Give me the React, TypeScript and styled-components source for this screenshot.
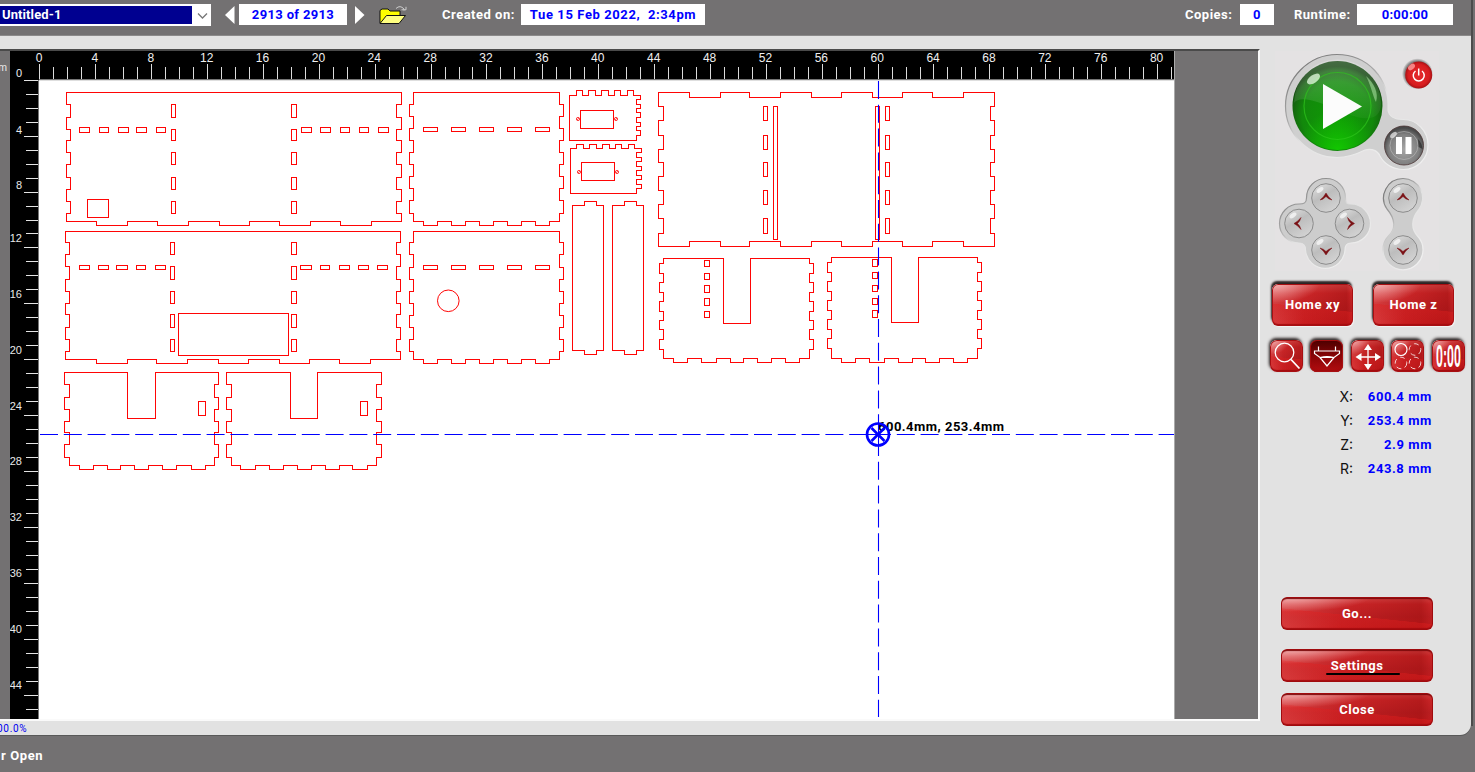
import React from "react";
import styled, { createGlobalStyle } from "styled-components";

const GlobalStyle = createGlobalStyle`
  * { box-sizing: border-box; }
  html, body { margin: 0; padding: 0; }
  body {
    width: 1475px;
    height: 772px;
    overflow: hidden;
    background: #737172;
    font-family: Roboto, "Liberation Sans", sans-serif;
  }
  button { font-family: inherit; border: 0; padding: 0; }
`;

/* ---------- shell ---------- */

const Screen = styled.div`
  display: flex;
  width: 1475px;
  height: 772px;
  overflow: hidden;
  background: #737172;
`;

const Window = styled.div`
  display: flex;
  flex-direction: column;
  width: 1471px;
`;

const EdgeStrip = styled.div`
  width: 4px;
  height: 726px;
  background: linear-gradient(90deg, #4c4c4c 0 2px, #737172 2px);
`;

const TopBar = styled.header`
  display: flex;
  align-items: flex-start;
  height: 36px;
  padding-top: 4px;
  border-bottom: 1px solid #8b8a8a;
`;

const Body = styled.main`
  display: flex;
  align-items: flex-start;
  height: 699px;
  background: #e2e2e2;
  border-bottom-right-radius: 11px;
  box-shadow: 0 1px 0 #595959;
`;

const StatusBar = styled.footer`
  padding: 13px 0 0 1px;
  color: #fff;
  font-size: 13px;
  font-weight: 700;
  line-height: 16px;
  letter-spacing: 0.6px;
`;

/* ---------- top bar parts ---------- */

const FileSelect = styled.div`
  display: flex;
  width: 211px;
  height: 22px;
  padding: 2px 0;
  background: #fff;
`;

const Selected = styled.div`
  width: 192px;
  padding-left: 2px;
  background: #000090;
  color: #fff;
  font-size: 13px;
  font-weight: 700;
  line-height: 17px;
  letter-spacing: 0.1px;
`;

const Arrow = styled.svg<{ $left: number }>`
  display: block;
  width: 10px;
  height: 18px;
  margin: 2px 0 0 ${(p) => p.$left}px;
`;

const Field = styled.div<{ $width: number; $left: number; $spacing?: number }>`
  width: ${(p) => p.$width}px;
  height: 21px;
  margin-left: ${(p) => p.$left}px;
  background: #fff;
  color: #0000ff;
  font-size: 13px;
  font-weight: 700;
  line-height: 21px;
  letter-spacing: ${(p) => p.$spacing ?? 0.3}px;
  text-align: center;
  white-space: pre;
`;

const Caption = styled.div<{ $left: number; $width: number }>`
  width: ${(p) => p.$width}px;
  margin-left: ${(p) => p.$left}px;
  color: #fff;
  font-size: 13px;
  font-weight: 700;
  line-height: 21px;
  letter-spacing: 0.5px;
  white-space: nowrap;
`;

const FolderIcon = styled.svg`
  display: block;
  width: 30px;
  height: 22px;
  margin-left: 13px;
`;

/* ---------- work area ---------- */

const WorkColumn = styled.section`
  display: flex;
  flex-direction: column;
  width: 1260px;
  padding-top: 13px;
`;

const Frame = styled.div`
  display: flex;
  width: 1260px;
  height: 672px;
  background: #737172;
  border-top: 2px solid #4a4a4a;
  border-right: 2px solid #fafafa;
  border-bottom: 2px solid #fafafa;
`;

const Gutter = styled.div`
  display: flex;
  justify-content: flex-end;
  width: 10px;
  padding: 10px 3px 0 0;
  color: #eee;
  font-size: 10px;
  line-height: 14px;
`;

const Bed = styled.div`
  display: flex;
  flex-direction: column;
  width: 1165px;
  border-right: 1px solid #aaa;
`;

const BedRow = styled.div`
  display: flex;
`;

const TopRuler = styled.svg`
  display: block;
  width: 1164px;
  height: 29px;
  background: #000;
`;

const SideRuler = styled.svg`
  display: block;
  width: 29px;
  height: 639px;
  background: #000;
`;

const Sheet = styled.svg`
  display: block;
  width: 1135px;
  height: 639px;
  background: #fff;
`;

const Zoom = styled.div`
  margin-left: -3px;
  color: #0000f0;
  font-size: 10px;
  line-height: 15px;
  letter-spacing: 0.7px;
`;

/* ---------- control panel ---------- */

const Panel = styled.aside`
  display: flex;
  flex-direction: column;
  width: 211px;
  padding-top: 14px;
`;

const Pad = styled.svg`
  display: block;
  width: 164px;
  height: 222px;
  margin-left: 15px;
`;

const HomeRow = styled.div`
  display: flex;
  gap: 20px;
  padding: 12px 0 0 12px;
`;

const redGloss = `
  background:
    radial-gradient(ellipse 55% 45% at 4% 0%, rgba(255,255,255,.55), rgba(255,255,255,0) 100%),
    linear-gradient(186deg, rgba(0,0,0,0) 55%, rgba(225,30,30,.4) 56%, rgba(225,30,30,0) 95%),
    linear-gradient(90deg, rgba(255,130,130,.3), rgba(150,0,0,0) 40%, rgba(130,0,0,.3) 92%, rgba(200,0,0,0)),
    linear-gradient(180deg, #d94848 0, #cb2628 22%, #bd2023 60%, #c91c1e 100%);
`;

const HomeButton = styled.button`
  width: 81px;
  height: 42px;
  border-radius: 6px;
  ${redGloss}
  box-shadow: inset 0 0 0 1px #a80f12, inset 0 -2px 1px #a60d10, -1px -3px 2px #2c2424, 1px 1px 1px #f4f4f4;
  color: #fff;
  font-size: 13px;
  font-weight: 700;
  line-height: 40px;
  letter-spacing: 0.55px;
`;

const ToolRow = styled.div`
  display: flex;
  gap: 7.6px;
  padding: 14px 0 0 9.5px;
`;

const ToolButton = styled.button<{ $pressed?: boolean }>`
  width: 33px;
  height: 32px;
  border-radius: 7px;
  ${redGloss}
  ${(p) => p.$pressed && "background: linear-gradient(180deg, #4c0000, #8d0507 55%, #b30d10);"}
  box-shadow: inset 0 0 0 1px #a80f12, inset 0 -2px 1px #a00b0e, -1px -2px 3px #2c2424;
`;

const ToolIcon = styled.svg`
  display: block;
  width: 33px;
  height: 32px;
`;

const Readouts = styled.dl`
  display: grid;
  grid-template-columns: 93px 79px;
  grid-auto-rows: 24.1px;
  margin: 12.5px 0 0;
`;

const Axis = styled.dt`
  color: #111;
  font-family: Inter, Roboto, sans-serif;
  font-size: 14px;
  line-height: 24px;
  text-align: right;
`;

const AxisValue = styled.dd`
  margin: 0;
  color: #0000ff;
  font-size: 13px;
  font-weight: 700;
  line-height: 24px;
  letter-spacing: 0.6px;
  text-align: right;
`;

const Actions = styled.div`
  display: flex;
  flex-direction: column;
  padding: 116.5px 0 0 21px;
`;

const ActionButton = styled.button<{ $gap?: number }>`
  width: 152px;
  height: 33px;
  margin-top: ${(p) => p.$gap ?? 0}px;
  border-radius: 6px;
  ${redGloss}
  box-shadow: inset 0 0 0 1px #a00b0e, inset 0 2px 1px #7c090b, inset 0 -2px 1px #a60d10;
  color: #fff;
  font-size: 13px;
  font-weight: 700;
  line-height: 32px;
  letter-spacing: 0.5px;
`;

const Underlined = styled.span`
  position: relative;
  &::after {
    content: "";
    position: absolute;
    left: -5px;
    right: -17px;
    bottom: -2px;
    height: 2px;
    border-radius: 1px;
    background: #000;
  }
`;

/* ---------- cut drawing ---------- */

type Box = [number, number, number, number];

// Finger joints along a vertical edge, alternating between x = a and x = b.
const vz = (ys: number[], a: number, b: number) =>
  ys.map((y, i) => `V${y}H${i % 2 ? a : b}`).join("");
// Finger joints along a horizontal edge, alternating between y = a and y = b.
const hz = (xs: number[], a: number, b: number) =>
  xs.map((x, i) => `H${x}V${i % 2 ? a : b}`).join("");
const rev = (n: number[]) => [...n].reverse();
const pairs = (n: number[]): [number, number][] =>
  n.reduce<[number, number][]>((out, v, i) => (i % 2 ? out : [...out, [v, n[i + 1]]]), []);
const rowSlots = (xs: number[], y0: number, y1: number): Box[] =>
  pairs(xs).map(([a, b]) => [a, y0, b, y1]);
const colSlots = (ys: number[], x0: number, x1: number): Box[] =>
  pairs(ys).map(([a, b]) => [x0, a, x1, b]);

const aY = [104, 117, 129, 140, 152, 164, 177, 189, 201, 213];
const bY = [242, 254, 266, 279, 291, 303, 314, 327, 339, 351];
const cY = [384, 397, 409, 421, 432, 444, 457];
const dY = [104, 116, 128, 140, 152, 164, 176, 188, 200, 213];
const eY = [242, 254, 267, 279, 291, 303, 315, 327, 339, 351];
const dX = [423, 437, 451, 465, 479, 493, 507, 521, 535, 549];
const iX = [689, 720, 749, 780, 811, 841, 872, 902, 932, 963];
const iY = [106, 120, 135, 149, 162, 176, 190, 204, 218, 233];
const jY = [263, 273, 282, 292, 301, 311, 320, 329, 339, 349];
const kY = [262, 272, 281, 291, 300, 310, 319, 329, 338, 348];

const outlines = [
  `M66 92${vz(aY, 66, 70)}V221${hz([96, 127, 157, 188, 219, 249, 279, 310, 340, 371], 221, 225)}H401${vz(rev(aY), 401, 396)}V92Z`,
  `M65 231${vz(bY, 65, 69)}V359${hz([96, 127, 156, 187, 218, 248, 279, 309, 339, 370], 359, 363)}H400${vz(rev(bY), 400, 396)}V231Z`,
  `M64 372${vz(cY, 64, 69)}V465${hz([79, 93, 107, 120, 134, 148, 162, 176, 191, 205], 465, 469)}H214V457H218${vz(rev(cY).slice(1), 218, 214)}V372H155V418H127V372Z`,
  `M226 372${vz(cY, 226, 231)}V465${hz([240, 255, 269, 283, 297, 311, 325, 339, 352, 367], 465, 469)}H376V457H381${vz(rev(cY).slice(1), 381, 376)}V372H317V418H290V372Z`,
  `M413 92${vz(dY, 413, 409)}V221${hz(dX, 221, 225)}H559${vz(rev(dY), 559, 563)}V92Z`,
  `M413 231${vz(eY, 413, 409)}V359${hz(dX, 359, 363)}H559${vz(rev(eY), 559, 563)}V231Z`,
  `M569 95${hz([576, 582, 588, 595, 601, 608, 614, 620, 627, 633], 95, 90)}H640${vz([99, 104, 108, 112, 117, 122, 126, 130, 135], 640, 636)}V140H569Z`,
  `M570 148${hz([576, 583, 589, 596, 602, 609, 615, 621, 628, 634], 148, 144)}H641${vz([152, 157, 161, 166, 170, 175, 179, 184, 188], 641, 636)}V193H570Z`,
  `M572 205H584V201H596V205H603V350H596V354H584V350H572Z`,
  `M612 205H624V201H636V205H643V350H636V354H624V350H612Z`,
  `M658 92${hz(iX, 92, 97)}H994${vz(iY, 994, 990)}V246${hz(rev(iX), 246, 241)}H658${vz(rev(iY), 658, 663)}V92Z`,
  `M663 258${vz(jY, 663, 659)}V358${hz([673, 687, 701, 716, 730, 743, 757, 771, 785, 799], 358, 362)}H809${vz(rev(jY), 809, 813)}V258H750V323H723V258Z`,
  `M831 257${vz(kY, 831, 827)}V358${hz([841, 855, 869, 884, 898, 912, 925, 939, 953, 967], 358, 362)}H977${vz(rev(kY), 977, 981)}V257H918V322H891V257Z`,
];

const slots: Box[] = [
  ...rowSlots([79, 89, 99, 108, 118, 128, 136, 146, 156, 165], 127, 132),
  ...rowSlots([301, 311, 320, 330, 340, 349, 359, 368, 378, 388], 127, 132),
  ...colSlots(aY, 171, 175),
  ...colSlots(aY, 291, 296),
  [87, 199, 108, 217],
  ...rowSlots([79, 89, 98, 108, 116, 127, 136, 145, 155, 165], 265, 269),
  ...rowSlots([300, 311, 320, 329, 339, 349, 358, 368, 377, 387], 265, 269),
  ...colSlots(bY, 170, 174),
  ...colSlots(bY, 291, 296),
  [178, 313, 288, 355],
  [198, 401, 205, 415],
  [360, 401, 367, 415],
  ...rowSlots(dX, 127, 131),
  ...rowSlots(dX, 265, 269),
  [580, 110, 613, 128],
  [581, 162, 614, 180],
  ...colSlots(iY, 763, 767),
  ...colSlots(iY, 885, 889),
  [773, 106, 777, 239],
  [875, 106, 879, 239],
  ...colSlots([260, 266, 273, 279, 285, 292, 298, 305, 311, 317], 704, 709),
  ...colSlots([259, 266, 272, 278, 285, 291, 298, 304, 310, 317], 872, 877),
];

const holes = [
  [577.5, 118.5],
  [615.5, 118.5],
  [578.5, 171.5],
  [616.5, 171.5],
];

const slotPath = slots.map(([a, b, c, d]) => `M${a} ${b}H${c}V${d}H${a}Z`).join("");

function CutSheet() {
  return (
    <Sheet viewBox="39 80 1135 639">
      <path d="M39 80.5H1174" stroke="#dedede" />
      <g transform="translate(.5 .5)" fill="none" stroke="#ff0505" strokeWidth="1">
        {outlines.map((d) => (
          <path key={d} d={d} shapeRendering="crispEdges" />
        ))}
        <path d={slotPath} shapeRendering="crispEdges" />
        <circle cx="447.8" cy="300.3" r="10.8" />
        {holes.map(([x, y]) => (
          <g key={`${x}-${y}`}>
            <circle cx={x} cy={y} r="1.6" strokeWidth=".8" />
            <path d={`M${x - 1} ${y + 1}l2 -2`} strokeWidth=".6" />
          </g>
        ))}
      </g>
      <text x="878" y="431" fontFamily="Roboto, sans-serif" fontSize="13" fontWeight="700" textLength="126" fill="#000">
        600.4mm, 253.4mm
      </text>
      <g fill="none" stroke="#0000ff">
        <path d="M40 434.5H1174" strokeDasharray="18 5.8" />
        <path d="M878.5 81V717" strokeDasharray="18 5.8" strokeWidth="1.1" />
        <circle cx="878" cy="434.5" r="11" strokeWidth="2.6" />
        <path d="M878.5 423v24M867 434.5h22" strokeWidth="1" />
        <path d="M871.5 428l13 13M884.5 428l-13 13" strokeWidth="2.6" />
      </g>
    </Sheet>
  );
}

const STEP = 13.97;

function HorizontalRuler() {
  return (
    <TopRuler viewBox="10 51 1164 29">
      {Array.from({ length: 82 }, (_, i) => {
        const x = Math.floor(39.9 + i * STEP) + 0.5;
        return <path key={i} d={`M${x} ${i % 4 ? 67 : 64}V79`} stroke="#dcdcdc" />;
      })}
      <g fill="#f0f0f0" fontFamily="Liberation Sans, sans-serif" fontSize="12" textAnchor="middle">
        {Array.from({ length: 21 }, (_, i) => (
          <text key={i} x={39 + i * 4 * STEP} y="62">
            {i * 4}
          </text>
        ))}
        <text x="19" y="77" fontSize="11">
          0
        </text>
      </g>
      <path d="M39 79.5H1174" stroke="#777" />
      <path d="M24 79.5H38" stroke="#000" />
    </TopRuler>
  );
}

const sideLabels = [129.5, 184.5, 238, 293.5, 349.5, 405.5, 461, 517, 573, 628.5, 685];

function VerticalRuler() {
  return (
    <SideRuler viewBox="10 80 29 639">
      {Array.from({ length: 46 }, (_, i) => {
        const y = Math.floor(80.2 + i * 13.98) + 0.5;
        return <path key={i} d={`M${i % 4 ? 26 : 24} ${y}H38`} stroke="#e4e4e4" />;
      })}
      <g fill="#e8e8e8" fontFamily="Liberation Sans, sans-serif" fontSize="11" textAnchor="end">
        {sideLabels.map((y, i) => (
          <text key={y} x="22" y={y + 4}>
            {(i + 1) * 4}
          </text>
        ))}
      </g>
      <path d="M38.5 80V719" stroke="#777" />
    </SideRuler>
  );
}

/* ---------- jog pad ---------- */

const jogKeys = [
  { x: 1326, y: 198, turn: 0 },
  { x: 1299, y: 223.5, turn: -90 },
  { x: 1349.5, y: 223.5, turn: 90 },
  { x: 1326, y: 250, turn: 180 },
  { x: 1403, y: 198, turn: 0 },
  { x: 1403, y: 250, turn: 180 },
];

function ControlPad() {
  return (
    <Pad viewBox="1275 50 164 222">
      <defs>
        <radialGradient id="green" cx=".5" cy=".62" r=".56">
          <stop offset="0" stopColor="#0f9a05" />
          <stop offset=".7" stopColor="#12890b" />
          <stop offset=".92" stopColor="#14600f" />
          <stop offset="1" stopColor="#0b3f08" />
        </radialGradient>
        <radialGradient id="greenGlow" cx=".5" cy="1" r=".45">
          <stop offset="0" stopColor="#12c800" />
          <stop offset="1" stopColor="#12c800" stopOpacity="0" />
        </radialGradient>
        <linearGradient id="greenTop" x1="0" y1="0" x2="0" y2="1">
          <stop offset="0" stopColor="#fff" stopOpacity=".24" />
          <stop offset="1" stopColor="#fff" stopOpacity=".04" />
        </linearGradient>
        <radialGradient id="greyKey" cx=".5" cy=".6" r=".55">
          <stop offset="0" stopColor="#a5a5a5" />
          <stop offset=".7" stopColor="#808080" />
          <stop offset="1" stopColor="#484848" />
        </radialGradient>
        <radialGradient id="redKey" cx=".5" cy=".5" r=".52">
          <stop offset="0" stopColor="#e52a2d" />
          <stop offset=".75" stopColor="#d81d20" />
          <stop offset="1" stopColor="#a00f12" />
        </radialGradient>
        <linearGradient id="jog" x1="0" y1="0" x2=".6" y2="1">
          <stop offset="0" stopColor="#e4e4e4" />
          <stop offset=".5" stopColor="#bdbdbd" />
          <stop offset="1" stopColor="#d2d2d2" />
        </linearGradient>
        <linearGradient id="rim" x1="0" y1="0" x2=".7" y2="1">
          <stop offset="0" stopColor="#686868" />
          <stop offset=".4" stopColor="#aaa" />
          <stop offset=".55" stopColor="#e2e2e2" />
          <stop offset="1" stopColor="#efefef" />
        </linearGradient>
        <radialGradient id="redHalo" cx=".5" cy=".5" r=".5">
          <stop offset=".82" stopColor="#777" stopOpacity=".9" />
          <stop offset="1" stopColor="#777" stopOpacity="0" />
        </radialGradient>
      </defs>
      <rect x="1275" y="51" width="164" height="220" fill="#e4e2e3" />

      <path
        d="M1337 54.5C1309 54.5 1285.5 78 1285.5 106S1309 157.5 1337 157.5C1347 157.5 1356 154.5 1365 150C1372 148 1378 151 1380 156C1384 164 1393 169.5 1403.500 169.5C1417 169.5 1428 159 1428 145S1417 119.5 1403.500 119.5C1396 119.5 1389 117.5 1388 110C1390 78 1367 54.5 1337 54.5Z"
        fill="#cfcfcf"
        stroke="url(#rim)"
        strokeWidth="1.2"
      />
      <circle cx="1337.5" cy="106" r="45" fill="url(#green)" />
      <path d="M1294 103a43.5 43.5 0 0 1 87 0C1381 125 1358 119 1340 111S1300 94 1294 103Z" fill="url(#greenTop)" />
      <circle cx="1337.5" cy="106" r="44" fill="url(#greenGlow)" />
      <circle cx="1337.5" cy="106" r="33.5" fill="none" stroke="#2fc71d" strokeWidth="1.2" opacity=".65" />
      <ellipse cx="1313.5" cy="79" rx="7.5" ry="4" fill="#dcf2d8" opacity=".8" transform="rotate(-35 1313.5 79)" />
      <path d="M1366 76C1374 83 1379 93 1376 102C1373 97 1372 88 1366 76Z" fill="#a5e09c" opacity=".6" />
      <path d="M1323 84L1362 106.5L1323 129Z" fill="#fcfcfc" />

      <circle cx="1404" cy="145.5" r="19.5" fill="url(#greyKey)" stroke="#4a3434" strokeWidth=".8" />
      <circle cx="1404" cy="145.5" r="14" fill="none" stroke="#bdbdbd" opacity=".6" />
      <ellipse cx="1393.5" cy="135" rx="4" ry="2.2" fill="#ddd" opacity=".8" transform="rotate(-42 1393.5 135)" />
      <path d="M1418 139q4 4 4.500 10l-4 -2z" fill="#1d1d1d" opacity=".6" />
      <path d="M1396 137h6v17h-6zM1405.500 137h6v17h-6z" fill="#fff" />

      <circle cx="1417.5" cy="73.8" r="15.500" fill="url(#redHalo)" />
      <circle cx="1418.7" cy="75" r="13.500" fill="url(#redKey)" />
      <ellipse cx="1411.5" cy="67" rx="4" ry="2.5" fill="#ff9d9d" opacity=".8" transform="rotate(-40 1411.5 67)" />
      <path d="M1415.500 71a5.500 5.500 0 1 0 6.500 0M1418.700 68.500v7" fill="none" stroke="#fff" strokeWidth="1.5" />

      <path
        d="M1326 178.5C1315 178.5 1306.500 187 1306.500 198C1306.500 203 1304 204 1299 204A19.5 19.5 0 0 0 1299 243C1304 243 1305.500 245 1305.500 250A19.800 19.800 0 0 0 1345 250C1345 245 1346.500 243 1351 243A19.5 19.5 0 0 0 1351 204C1346.500 204 1345.500 203 1345.500 198C1345.500 187 1337 178.500 1326 178.500Z"
        fill="#cdcdcd"
        stroke="url(#rim)"
        strokeWidth="1.2"
      />
      <path
        d="M1403 178.5A19.5 19.5 0 0 0 1387 209C1395.500 219 1396 229 1388.500 236A20 20 0 1 0 1417.500 236C1411 229 1411 219 1418.500 210A19.5 19.5 0 0 0 1403 178.500Z"
        fill="#cdcdcd"
        stroke="url(#rim)"
        strokeWidth="1.2"
      />
      {jogKeys.map((k) => (
        <g key={`${k.x}-${k.y}`} transform={`translate(${k.x} ${k.y})`}>
          <circle r="14.3" fill="url(#jog)" stroke="#8c8c8c" strokeWidth="1" />
          <ellipse cx="-6" cy="-8" rx="4" ry="2" fill="#f6f6f6" opacity=".8" transform="rotate(-35 -6 -8)" />
          <path
            d="M0 -5Q2 -1 6 2Q2 1 0 -1.5Q-2 1 -6 2Q-2 -1 0 -5Z"
            fill="#7a1014"
            stroke="#7a1014"
            strokeWidth=".5"
            transform={`rotate(${k.turn})`}
          />
        </g>
      ))}
    </Pad>
  );
}

/* ---------- page ---------- */

const readouts = [
  ["X:", "600.4 mm"],
  ["Y:", "253.4 mm"],
  ["Z:", "2.9 mm"],
  ["R:", "243.8 mm"],
];

export default function App() {
  return (
    <>
      <GlobalStyle />
      <Screen>
        <Window>
          <TopBar>
            <FileSelect>
              <Selected>Untitled-1</Selected>
              <svg width="18" height="18">
                <path d="M6 7.5l4.500 4.500 4.500-4.500" fill="none" stroke="#777" strokeWidth="1.3" />
              </svg>
            </FileSelect>
            <Arrow $left={14}>
              <path d="M9.5 0V18L0 9Z" fill="#fff" />
            </Arrow>
            <Field $left={4} $width={108} $spacing={0.35}>
              2913 of 2913
            </Field>
            <Arrow $left={8}>
              <path d="M0 0V18L9.5 9Z" fill="#fff" />
            </Arrow>
            <FolderIcon viewBox="378 4 30 22">
              <path d="M380 23V10.500L382 9h6l2 2h10v4" fill="#ffff00" stroke="#111" />
              <path d="M380 23.500L386.500 15.500H405.500L399 23.500Z" fill="#ffff80" stroke="#111" />
              <path d="M396 8.500q4 -4 8 0.500v1.500M401.500 9.800h4.500v-3" fill="none" stroke="#ccc" />
            </FolderIcon>
            <Caption $left={34} $width={79}>
              Created on:
            </Caption>
            <Field $left={0} $width={184} $spacing={0.6}>
              {"Tue 15 Feb 2022,  2:34pm"}
            </Field>
            <Caption $left={480} $width={55}>
              Copies:
            </Caption>
            <Field $left={0} $width={34}>
              0
            </Field>
            <Caption $left={20} $width={63}>
              Runtime:
            </Caption>
            <Field $left={0} $width={96}>
              0:00:00
            </Field>
          </TopBar>

          <Body>
            <WorkColumn>
              <Frame>
                <Gutter>m</Gutter>
                <Bed>
                  <HorizontalRuler />
                  <BedRow>
                    <VerticalRuler />
                    <CutSheet />
                  </BedRow>
                </Bed>
              </Frame>
              <Zoom>00.0%</Zoom>
            </WorkColumn>

            <Panel>
              <ControlPad />
              <HomeRow>
                <HomeButton>Home xy</HomeButton>
                <HomeButton>Home z</HomeButton>
              </HomeRow>
              <ToolRow>
                <ToolButton aria-label="Zoom">
                  <ToolIcon fill="none" stroke="#fff">
                    <circle cx="14.5" cy="12.5" r="9.3" strokeWidth="1.3" />
                    <path d="M21 19.500L29.500 28.500" strokeWidth="1.8" />
                  </ToolIcon>
                </ToolButton>
                <ToolButton $pressed aria-label="Focus">
                  <ToolIcon fill="none" stroke="#fff" strokeWidth="1.2">
                    <path d="M8.500 6.500v4.500M25.500 6.500v4.500M4.500 11H29.500V13.500L24 17.500H10L4.500 13.500ZM10 17.500L17 26L24 17.500M10 17.500Q17 15.500 24 17.500" />
                  </ToolIcon>
                </ToolButton>
                <ToolButton aria-label="Move">
                  <ToolIcon fill="#fff" stroke="#fff">
                    <path d="M17 9V25M9 17H26" strokeWidth="1.3" />
                    <path
                      d="M17 4l4 6h-8zM17 30l4-6h-8zM4.500 17l6-4v8zM30 17l-6-4v8z"
                      stroke="none"
                    />
                  </ToolIcon>
                </ToolButton>
                <ToolButton aria-label="Repeat">
                  <ToolIcon fill="none" stroke="#fff" strokeWidth="1.2">
                    <circle cx="10" cy="9.5" r="6" />
                    <g strokeDasharray="5 3.5" opacity=".8" strokeWidth="1">
                      <circle cx="24" cy="9.5" r="5.8" />
                      <circle cx="10" cy="23" r="5.8" />
                      <circle cx="24" cy="23" r="5.8" />
                    </g>
                  </ToolIcon>
                </ToolButton>
                <ToolButton aria-label="Timer">
                  <ToolIcon>
                    <text
                      transform="translate(4 27) scale(.4 1)"
                      fontFamily="Liberation Sans, sans-serif"
                      fontSize="31"
                      fontWeight="700"
                      fill="#fff"
                    >
                      0:00
                    </text>
                  </ToolIcon>
                </ToolButton>
              </ToolRow>
              <Readouts>
                {readouts.map(([axis, value]) => (
                  <React.Fragment key={axis}>
                    <Axis>{axis}</Axis>
                    <AxisValue>{value}</AxisValue>
                  </React.Fragment>
                ))}
              </Readouts>
              <Actions>
                <ActionButton>Go...</ActionButton>
                <ActionButton $gap={19}>
                  <Underlined>Settings</Underlined>
                </ActionButton>
                <ActionButton $gap={11}>Close</ActionButton>
              </Actions>
            </Panel>
          </Body>

          <StatusBar>r Open</StatusBar>
        </Window>
        <EdgeStrip />
      </Screen>
    </>
  );
}
